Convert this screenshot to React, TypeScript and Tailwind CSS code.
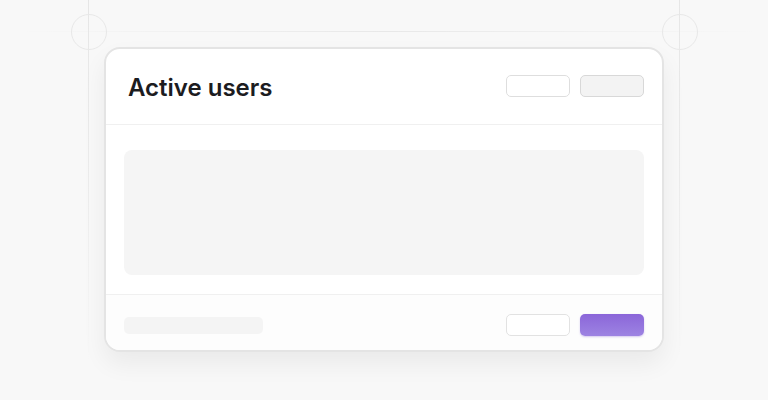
export default function App() {
    return (
        <div className="relative w-[768px] h-[400px] overflow-hidden bg-[#f8f8f8] font-['Inter',sans-serif]">
            {/* Guide lines & crosshairs */}
            <div className="absolute left-[16px] right-[8px] top-[31px] h-px bg-gradient-to-r from-transparent via-[#e8e8e8] to-transparent" />
            <div className="absolute left-[88px] top-0 h-[360px] w-px bg-gradient-to-b from-[#e6e6e6] via-[#ececec] to-transparent" />
            <div className="absolute left-[679px] top-0 h-[360px] w-px bg-gradient-to-b from-[#e6e6e6] via-[#ececec] to-transparent" />
            <div className="absolute left-[71px] top-[14px] h-[36px] w-[36px] rounded-full border border-[#e8e8e8]" />
            <div className="absolute left-[662px] top-[14px] h-[36px] w-[36px] rounded-full border border-[#e8e8e8]" />

            <div className="absolute left-[104px] top-[47px] w-[560px] h-[305px] rounded-[16px] border-2 border-[#e4e4e4] bg-white shadow-[0_12px_24px_rgba(0,0,0,0.06)] flex flex-col overflow-hidden">
                {/* Header */}
                <div className="h-[76px] flex items-center justify-between pl-[22px] pr-[18px] border-b border-[#f0f0f0]">
                    <h1 className="text-[24px] font-semibold text-[#1c1c1f] pt-[2px]">Active users</h1>
                    <div className="flex gap-[10px] -mt-[2px]">
                        <div className="w-[64px] h-[22px] rounded-[5px] border border-[#dedede] bg-white" />
                        <div className="w-[64px] h-[22px] rounded-[5px] border border-[#d8d8d8] bg-[#f3f3f3]" />
                    </div>
                </div>

                {/* Body */}
                <div className="flex-1 px-[18px] pt-[25px] pb-[19px] border-b border-[#f0f0f0]">
                    <div className="h-full rounded-[8px] bg-[#f5f5f5]" />
                </div>

                {/* Footer */}
                <div className="h-[55px] flex items-center justify-between px-[18px] pt-[5px] bg-[#fdfdfd]">
                    <div className="w-[139px] h-[17px] rounded-[5px] bg-[#f4f4f4]" />
                    <div className="flex gap-[10px]">
                        <div className="w-[64px] h-[22px] rounded-[5px] border border-[#e2e2e2] bg-white" />
                        <div className="w-[64px] h-[22px] rounded-[5px] bg-gradient-to-b from-[#8b66d9] to-[#9d83e2] shadow-[0_1px_2px_rgba(120,80,210,0.3)]" />
                    </div>
                </div>
            </div>
        </div>
    );
}
